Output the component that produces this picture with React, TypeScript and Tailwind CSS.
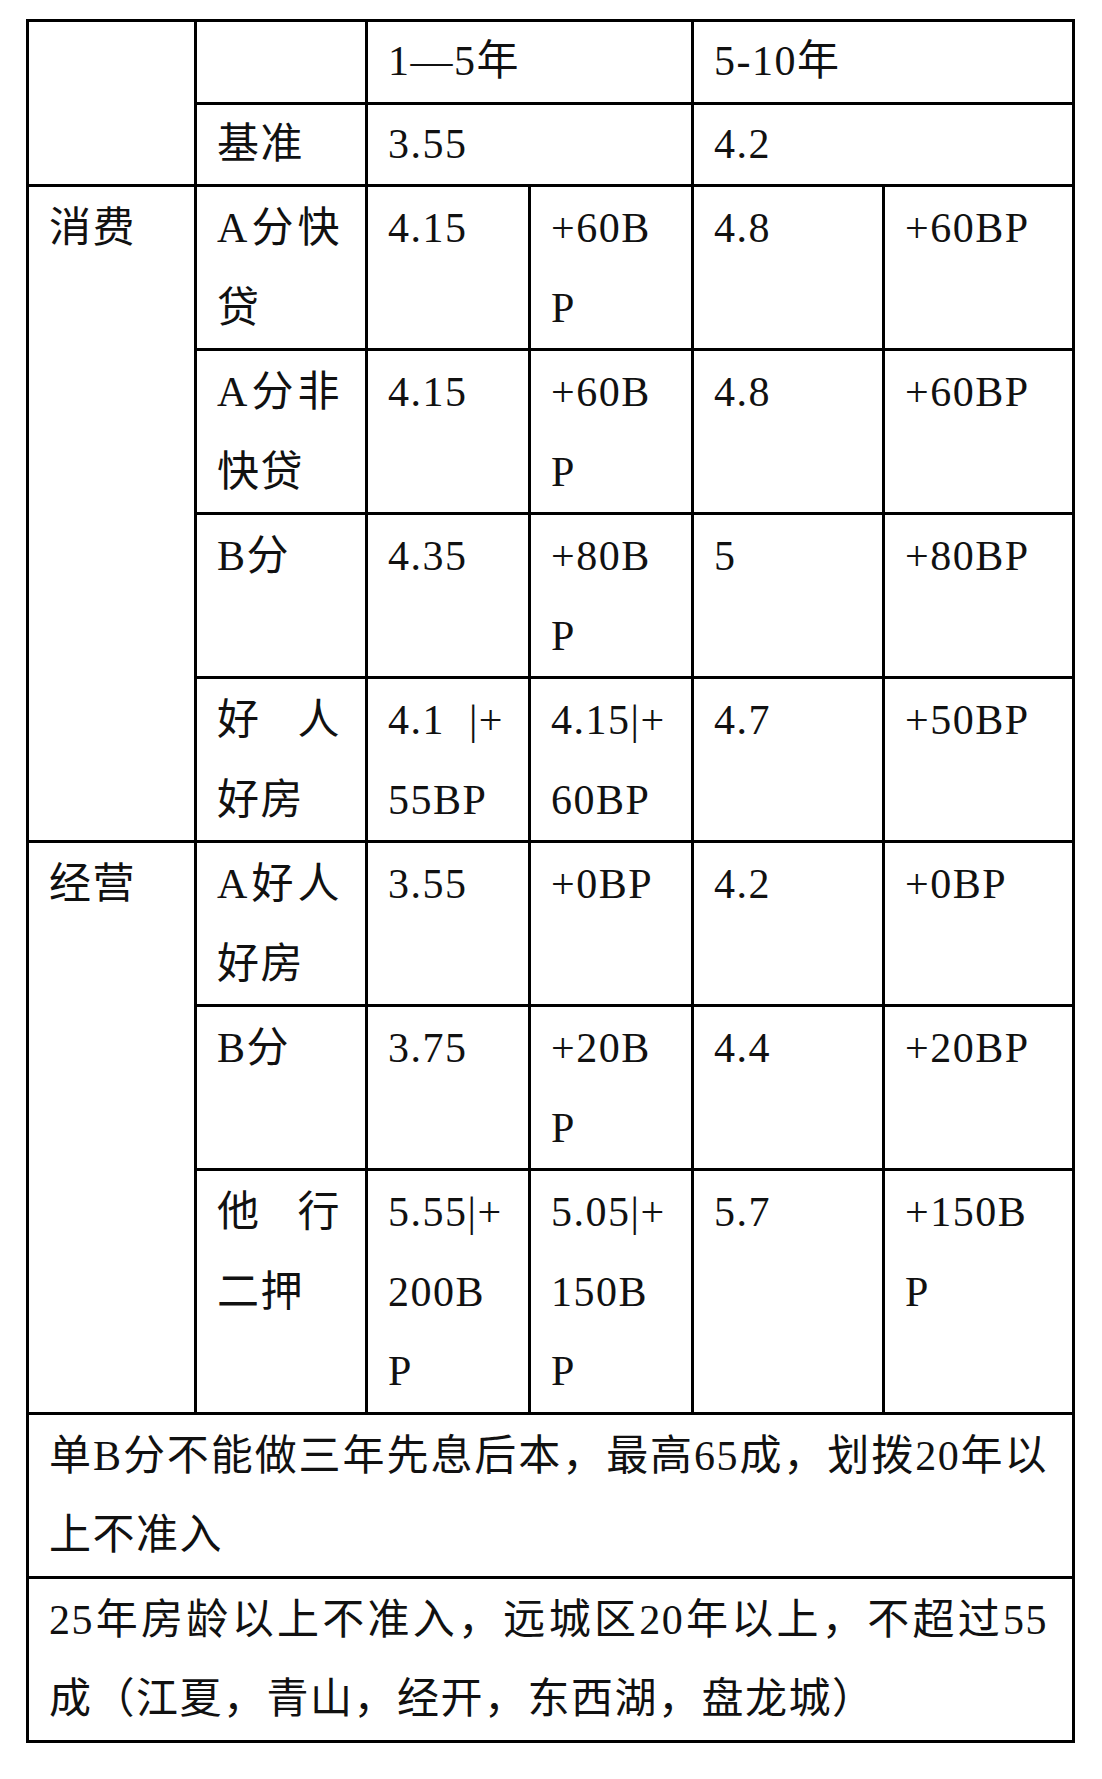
import React from "react";

type Cell = {
  lines: string[];
  spread?: boolean;
  rowSpan?: number;
  colSpan?: number;
};

const rows: Cell[][] = [
  [
    { lines: [], rowSpan: 2 },
    { lines: [] },
    { lines: ["1—5年"], colSpan: 2 },
    { lines: ["5-10年"], colSpan: 2 },
  ],
  [
    { lines: ["基准"] },
    { lines: ["3.55"], colSpan: 2 },
    { lines: ["4.2"], colSpan: 2 },
  ],
  [
    { lines: ["消费"], rowSpan: 4 },
    { lines: ["A分快", "贷"], spread: true },
    { lines: ["4.15"] },
    { lines: ["+60B", "P"] },
    { lines: ["4.8"] },
    { lines: ["+60BP"] },
  ],
  [
    { lines: ["A分非", "快贷"], spread: true },
    { lines: ["4.15"] },
    { lines: ["+60B", "P"] },
    { lines: ["4.8"] },
    { lines: ["+60BP"] },
  ],
  [
    { lines: ["B分"] },
    { lines: ["4.35"] },
    { lines: ["+80B", "P"] },
    { lines: ["5"] },
    { lines: ["+80BP"] },
  ],
  [
    { lines: ["好人", "好房"], spread: true },
    { lines: ["4.1 |+", "55BP"], spread: true },
    { lines: ["4.15|+", "60BP"] },
    { lines: ["4.7"] },
    { lines: ["+50BP"] },
  ],
  [
    { lines: ["经营"], rowSpan: 3 },
    { lines: ["A好人", "好房"], spread: true },
    { lines: ["3.55"] },
    { lines: ["+0BP"] },
    { lines: ["4.2"] },
    { lines: ["+0BP"] },
  ],
  [
    { lines: ["B分"] },
    { lines: ["3.75"] },
    { lines: ["+20B", "P"] },
    { lines: ["4.4"] },
    { lines: ["+20BP"] },
  ],
  [
    { lines: ["他行", "二押"], spread: true },
    { lines: ["5.55|+", "200B", "P"] },
    { lines: ["5.05|+", "150B", "P"] },
    { lines: ["5.7"] },
    { lines: ["+150B", "P"] },
  ],
  [
    {
      lines: ["单B分不能做三年先息后本，最高65成，划拨20年以", "上不准入"],
      spread: true,
      colSpan: 6,
    },
  ],
  [
    {
      lines: ["25年房龄以上不准入，远城区20年以上，不超过55", "成（江夏，青山，经开，东西湖，盘龙城）"],
      spread: true,
      colSpan: 6,
    },
  ],
];

function CellText({ cell }: { cell: Cell }) {
  return (
    <>
      {cell.lines.map((line, i) => {
        // only the lines that wrapped in the source get stretched edge to edge
        const stretch = cell.spread && i < cell.lines.length - 1;
        return (
          <div
            key={i}
            className={
              stretch
                ? "whitespace-nowrap leading-[79.5px] [text-align-last:justify] text-justify"
                : "whitespace-nowrap leading-[79.5px]"
            }
          >
            {line}
          </div>
        );
      })}
    </>
  );
}

export default function App() {
  return (
    <div className="bg-white min-h-[1779px] pt-[19px] pl-[26px]">
      <table
        className="table-fixed border-collapse w-[1049px] text-[42px] tracking-[1.5px] text-[#111]"
        style={{ fontFamily: '"Liberation Serif", "Noto Sans CJK SC", serif' }}
      >
        <colgroup>
          <col className="w-[168px]" />
          <col className="w-[171px]" />
          <col className="w-[163px]" />
          <col className="w-[163px]" />
          <col className="w-[191px]" />
          <col className="w-[190px]" />
        </colgroup>
        <tbody>
          {rows.map((row, r) => (
            <tr key={r}>
              {row.map((cell, c) => (
                <td
                  key={c}
                  rowSpan={cell.rowSpan}
                  colSpan={cell.colSpan}
                  className={
                    r < 2
                      ? "border-[3px] border-black align-top pl-5 pr-6 pt-0 pb-0 text-left"
                      : "border-[3px] border-black align-top pl-5 pr-6 pt-[2px] pb-0 text-left"
                  }
                >
                  <CellText cell={cell} />
                </td>
              ))}
            </tr>
          ))}
        </tbody>
      </table>
    </div>
  );
}
